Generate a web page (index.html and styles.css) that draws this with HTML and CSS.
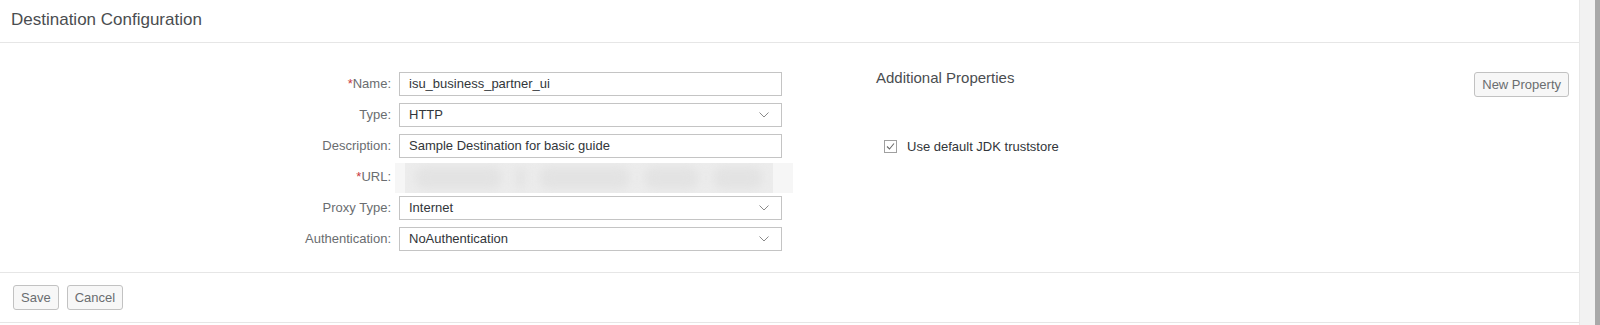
FILE: index.html
```html
<!DOCTYPE html>
<html>
<head>
<meta charset="utf-8">
<link rel="stylesheet" href="styles.css">
</head>
<body>
<div class="page">
  <div class="panel">
    <div class="header"><h1 class="title">Destination Configuration</h1></div>
    <div class="content">
      <div class="form">
        <label class="lbl"><span class="req">*</span>Name:</label>
        <div class="input">isu_business_partner_ui</div>
        <label class="lbl">Type:</label>
        <div class="input select">HTTP<svg class="chev" viewBox="0 0 10 6" width="10" height="6"><path d="M0.5 0.5 L5 5 L9.5 0.5" fill="none" stroke="#8a8a8a" stroke-width="1"/></svg></div>
        <label class="lbl">Description:</label>
        <div class="input">Sample Destination for basic guide</div>
        <label class="lbl"><span class="req">*</span>URL:</label>
        <div class="blur"><div class="blur-inner"><span class="blob b1"></span><span class="blob b2"></span><span class="blob b3"></span><span class="blob b4"></span><span class="blob b5"></span></div></div>
        <label class="lbl">Proxy Type:</label>
        <div class="input select">Internet<svg class="chev" viewBox="0 0 10 6" width="10" height="6"><path d="M0.5 0.5 L5 5 L9.5 0.5" fill="none" stroke="#8a8a8a" stroke-width="1"/></svg></div>
        <label class="lbl">Authentication:</label>
        <div class="input select">NoAuthentication<svg class="chev" viewBox="0 0 10 6" width="10" height="6"><path d="M0.5 0.5 L5 5 L9.5 0.5" fill="none" stroke="#8a8a8a" stroke-width="1"/></svg></div>
      </div>
      <div class="props">
        <div class="props-head">
          <h2 class="props-title">Additional Properties</h2>
          <button class="btn">New Property</button>
        </div>
        <div class="check">
          <span class="box"><svg viewBox="0 0 13 13" width="13" height="13"><path d="M3 6.5 L5.5 9 L10 3.5" fill="none" stroke="#6a6a6a" stroke-width="1.1"/></svg></span>
          <span class="check-lbl">Use default JDK truststore</span>
        </div>
      </div>
    </div>
    <div class="footer">
      <button class="btn">Save</button>
      <button class="btn">Cancel</button>
    </div>
  </div>
  <div class="track"></div>
  <div class="thumb"></div>
</div>
</body>
</html>
```

FILE: styles.css
```css
html, body {
  margin: 0;
  padding: 0;
  background: #ffffff;
  font-family: "Liberation Sans", Arial, sans-serif;
}
.page {
  display: flex;
  width: 1600px;
  height: 325px;
}
.panel {
  width: 1579px;
  border-right: 1px solid #e8e8e8;
  display: flex;
  flex-direction: column;
}
.track {
  width: 15px;
  background: #f2f2f2;
}
.thumb {
  width: 5px;
  background: #a9a9a9;
}
.header {
  height: 42px;
  border-bottom: 1px solid #e6e6e6;
  padding-left: 11px;
}
.title {
  margin: 0;
  font-size: 17px;
  font-weight: normal;
  color: #4a4d50;
  line-height: 40px;
}
.content {
  height: 229px;
  display: flex;
  box-sizing: border-box;
  padding-top: 29px;
}
.form {
  width: 782px;
  display: grid;
  grid-template-columns: 391px 383px;
  grid-auto-rows: 24px;
  column-gap: 8px;
  row-gap: 7px;
  align-content: start;
}
.lbl {
  font-size: 13px;
  color: #6a6d70;
  text-align: right;
  line-height: 24px;
}
.req {
  color: #c8383d;
}
.input {
  border: 1px solid #c4c4c4;
  background: #fff;
  font-size: 13px;
  color: #32363a;
  line-height: 22px;
  padding-left: 9px;
  display: flex;
  align-items: center;
  justify-content: space-between;
  padding-right: 12px;
}
.chev {
  display: block;
}
.blur {
  margin: -2px -11px -4px -4px;
  background: #f6f6f6;
  display: flex;
  padding: 0 20px 0 10px;
}
.blur-inner {
  flex: 1;
  background: #ececec;
  display: flex;
  align-items: center;
  gap: 14px;
  padding: 0 10px;
  overflow: hidden;
}
.blob {
  height: 22px;
  border-radius: 11px;
  background: #e3e3e3;
  filter: blur(4px);
}
.b1 { width: 95px; }
.b2 { width: 10px; }
.b3 { width: 100px; }
.b4 { width: 60px; }
.b5 { width: 55px; }
.props {
  flex: 1;
  margin-left: 94px;
  padding-right: 10px;
  display: flex;
  flex-direction: column;
}
.props-head {
  display: flex;
  justify-content: space-between;
  align-items: flex-start;
}
.props-title {
  margin: 0;
  font-size: 15px;
  font-weight: normal;
  color: #4a4d50;
  line-height: 18px;
  margin-top: -3px;
}
.btn {
  font-family: "Liberation Sans", Arial, sans-serif;
  font-size: 13px;
  color: #6a6d70;
  background: #f7f7f7;
  border: 1px solid #c2c2c2;
  border-radius: 3px;
  height: 25px;
  padding: 0 7px;
  line-height: 23px;
  margin: 0;
}
.check {
  display: flex;
  align-items: center;
  margin-top: 42px;
  margin-left: 8px;
  gap: 10px;
}
.box {
  width: 13px;
  height: 13px;
  box-sizing: border-box;
  border: 1px solid #a0a0a0;
  display: flex;
  align-items: center;
  justify-content: center;
}
.box svg {
  display: block;
  margin: -1px;
}
.check-lbl {
  font-size: 13px;
  color: #32363a;
}
.footer {
  border-top: 1px solid #e6e6e6;
  border-bottom: 1px solid #e6e6e6;
  height: 49px;
  display: flex;
  align-items: center;
  padding-left: 13px;
  gap: 8px;
}
```
